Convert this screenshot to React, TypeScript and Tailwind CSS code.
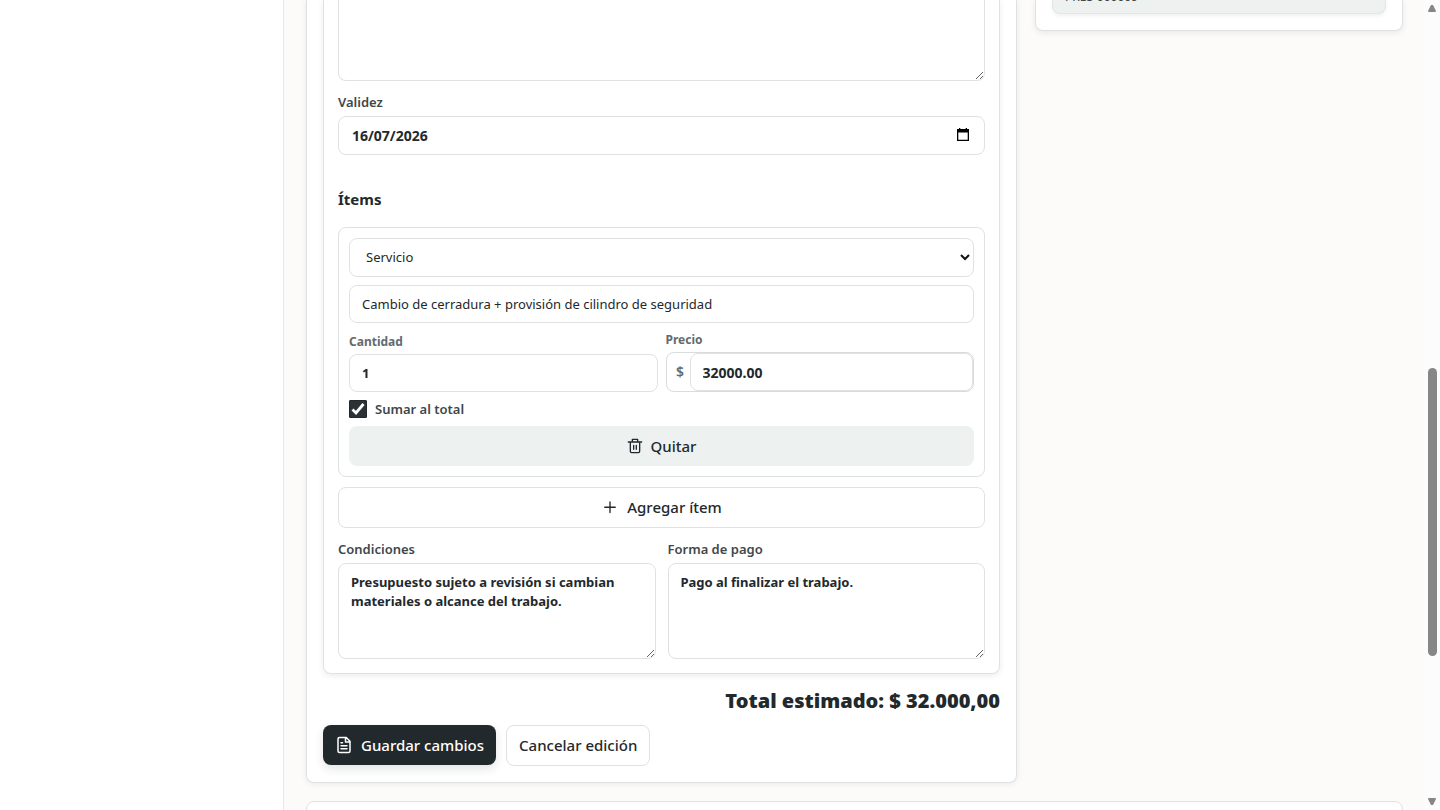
import { useState } from "react";
import type { ReactNode } from "react";

const label = "block text-[13px] leading-4 font-semibold text-[#3f474b]";
const smallLabel = "block text-xs leading-4 font-bold text-[#626b6f]";
const field = "block w-full rounded-lg border border-[#dfe2e3] bg-white px-3 outline-none";

function Icon({ children, size = 18 }: { children: ReactNode; size?: number }) {
  return (
    <svg
      width={size}
      height={size}
      viewBox="0 0 24 24"
      fill="none"
      stroke="currentColor"
      strokeWidth="2"
      strokeLinejoin="round"
      strokeLinecap="round"
      aria-hidden="true"
      className="shrink-0"
    >
      {children}
    </svg>
  );
}

function TextBox({ id, title, value }: { id: string; title: string; value: string }) {
  return (
    <div>
      <label htmlFor={id} className={label}>{title}</label>
      <textarea
        id={id}
        defaultValue={value}
        className={`${field} mt-1.5 h-24 resize-y py-[9px] text-[13px] leading-[19px] font-bold`}
      />
    </div>
  );
}

function ItemRow() {
  const [included, setIncluded] = useState(true);

  return (
    <div className="mt-4 flex flex-col gap-2 rounded-lg border border-[#dfe2e3] p-2.5">
      <div className="relative">
        <select
          aria-label="Tipo de ítem"
          defaultValue="servicio"
          className={`${field} h-[39px] appearance-none pl-4 text-[13px] font-normal`}
        >
          <option value="servicio">Servicio</option>
          <option value="material">Material</option>
        </select>
        <svg viewBox="0 0 10 7" className="pointer-events-none absolute top-4 right-1 h-[7px] w-2.5" aria-hidden="true">
          <path d="M1 1l4 4 4-4" fill="none" stroke="#111" strokeWidth="2" />
        </svg>
      </div>
      <input
        aria-label="Descripción"
        defaultValue="Cambio de cerradura + provisión de cilindro de seguridad"
        className={`${field} h-[38px] text-[13px]`}
      />
      <div className="grid grid-cols-2 items-end gap-2 pt-px">
        <div>
          <label htmlFor="qty" className={smallLabel}>Cantidad</label>
          <input id="qty" defaultValue="1" className={`${field} mt-1 h-[38px] text-[13px] font-bold`} />
        </div>
        <div>
          <label htmlFor="price" className={smallLabel}>Precio</label>
          <div className="mt-1 flex h-10 items-center rounded-lg border border-[#d9dcda]">
            <span className="w-[23px] pl-1 text-center text-sm font-semibold text-[#626b6f]">$</span>
            <input id="price" defaultValue="32000.00" className={`${field} h-[38px] min-w-0 flex-1 text-sm font-bold`} />
          </div>
        </div>
      </div>
      <label className="flex items-center gap-2 text-[13px] leading-[18px] font-semibold text-[#3f474b]">
        <span className="relative size-[18px]">
          <input
            type="checkbox"
            checked={included}
            onChange={(e) => setIncluded(e.target.checked)}
            className="block size-[18px] appearance-none rounded-[1px] border border-[#22292d] checked:bg-[#2b3236]"
          />
          {included && (
            <svg viewBox="0 0 18 18" className="pointer-events-none absolute inset-0" aria-hidden="true">
              <path d="M3.5 9.5l3.5 3.5 7.5-9" fill="none" stroke="#fff" strokeWidth="2.8" />
            </svg>
          )}
        </span>
        Sumar al total
      </label>
      <button type="button" className="flex h-10 items-center justify-center gap-2 rounded-lg bg-[#edf1f0] text-[15px] font-medium">
        <Icon size={16}>
          <path d="M2 6h20M8 6V2h8v4M5 6v14q0 2 2 2h10q2 0 2-2V6M10 11v6M14 11v6" />
        </Icon>
        Quitar
      </button>
    </div>
  );
}

function QuoteForm() {
  return (
    <form className="rounded-b-lg border border-t-0 border-[#dfe2e3] bg-white px-4 pb-4 shadow-[0_1px_6px_rgba(0,0,0,0.08)]">
      <div className="rounded-b-lg border border-t-0 border-[#dfe2e3] px-3.5 pb-3.5 shadow-[0_2px_6px_rgba(0,0,0,0.08)]">
        <textarea aria-label="Detalle" className={`${field} h-[81px] resize-y rounded-t-none border-t-0`} />

        <label htmlFor="valid" className={`${label} mt-[13px]`}>Validez</label>
        <div className="relative mt-1.5">
          <input id="valid" defaultValue="16/07/2026" className={`${field} h-[39px] px-[13px] text-sm font-bold`} />
          <button type="button" aria-label="Abrir calendario" className="absolute top-3 right-4">
            <svg width="12" height="13" viewBox="0 0 12 13" aria-hidden="true">
              <path d="M0 1h12v12H0zM1.3 4.5v7.2h9.4V4.5zM2 0h1.3v1H2zM8.7 0H10v1H8.7z" fillRule="evenodd" />
            </svg>
          </button>
        </div>

        <h3 className="mt-8 text-[15px] leading-6 font-bold">Ítems</h3>
        <ItemRow />

        <button
          type="button"
          className="mt-2.5 flex h-[41px] w-full items-center justify-center gap-2 rounded-lg border border-[#dfe2e3] bg-white text-[15px] font-medium"
        >
          <Icon><path d="M12 4v14M5 11h14" strokeWidth="1.8" /></Icon>
          Agregar ítem
        </button>

        <div className="mt-[13px] grid grid-cols-2 gap-3">
          <TextBox
            id="terms"
            title="Condiciones"
            value="Presupuesto sujeto a revisión si cambian materiales o alcance del trabajo."
          />
          <TextBox id="payment" title="Forma de pago" value="Pago al finalizar el trabajo." />
        </div>
      </div>

      <p className="mt-3 text-right text-xl leading-[30px] font-black">Total estimado: $ 32.000,00</p>

      <div className="mt-[9px] flex items-start gap-2.5">
        <button
          type="submit"
          className="flex h-10 items-center gap-2 rounded-lg bg-[#22292d] px-3 text-[15px] font-medium text-white shadow-[0_4px_10px_rgba(34,41,45,0.12)]"
        >
          <Icon>
            <path d="M6 2h9l5 5v13q0 2-2 2H6q-2 0-2-2V4q0-2 2-2zM14 2v6h6M8 9h2M8 13h8M8 17h8" />
          </Icon>
          Guardar cambios
        </button>
        <button type="button" className="h-[41px] rounded-lg border border-[#dfe2e3] bg-white px-3 text-[15px] font-medium">
          Cancelar edición
        </button>
      </div>
    </form>
  );
}

function Scrollbar() {
  return (
    <div className="flex w-4 shrink-0 flex-col items-center bg-[#fcfcfc] text-[#868686]" aria-hidden="true">
      <svg width="10" height="8" viewBox="0 0 10 8" className="mt-1"><path d="M4 1h2l3 6q0 1-1 1H2q-1 0-1-1z" fill="currentColor" /></svg>
      <div className="flex-[356]" />
      <div className="w-[9px] flex-[288] rounded-full bg-current" />
      <div className="flex-[142]" />
      <svg width="10" height="8" viewBox="0 0 10 8" className="mb-1"><path d="M4 7h2l3-6q0-1-1-1H2q-1 0-1 1z" fill="currentColor" /></svg>
    </div>
  );
}

export default function App() {
  return (
    <div className="flex h-screen overflow-hidden bg-white font-['Noto_Sans',sans-serif] text-[#22292d]">
      <aside className="w-[283px] shrink-0" />
      <main className="min-w-0 flex-1 border-l border-[#e6e6e4] bg-[#fcfbf9] pr-[21px] pl-[22px]">
        <div className="grid grid-cols-[minmax(0,1fr)_368px] items-start gap-[18px]">
          <QuoteForm />
          <section className="rounded-b-lg border border-t-0 border-[#dfe2e3] bg-white px-4 pb-4 shadow-[0_2px_6px_rgba(0,0,0,0.08)]">
            <div className="flex h-3.5 items-end rounded-b-lg border border-t-0 border-[#e2e6e6] bg-[#edf1f0] px-3 pb-2 shadow-[0_2px_4px_rgba(0,0,0,0.06)]">
              <p className="text-xs leading-4 text-[#3f474b]">PRES-000009</p>
            </div>
          </section>
        </div>
        <section className="mt-[18px] h-40 rounded-lg border border-[#dfe2e3] bg-white" />
      </main>
      <Scrollbar />
    </div>
  );
}
